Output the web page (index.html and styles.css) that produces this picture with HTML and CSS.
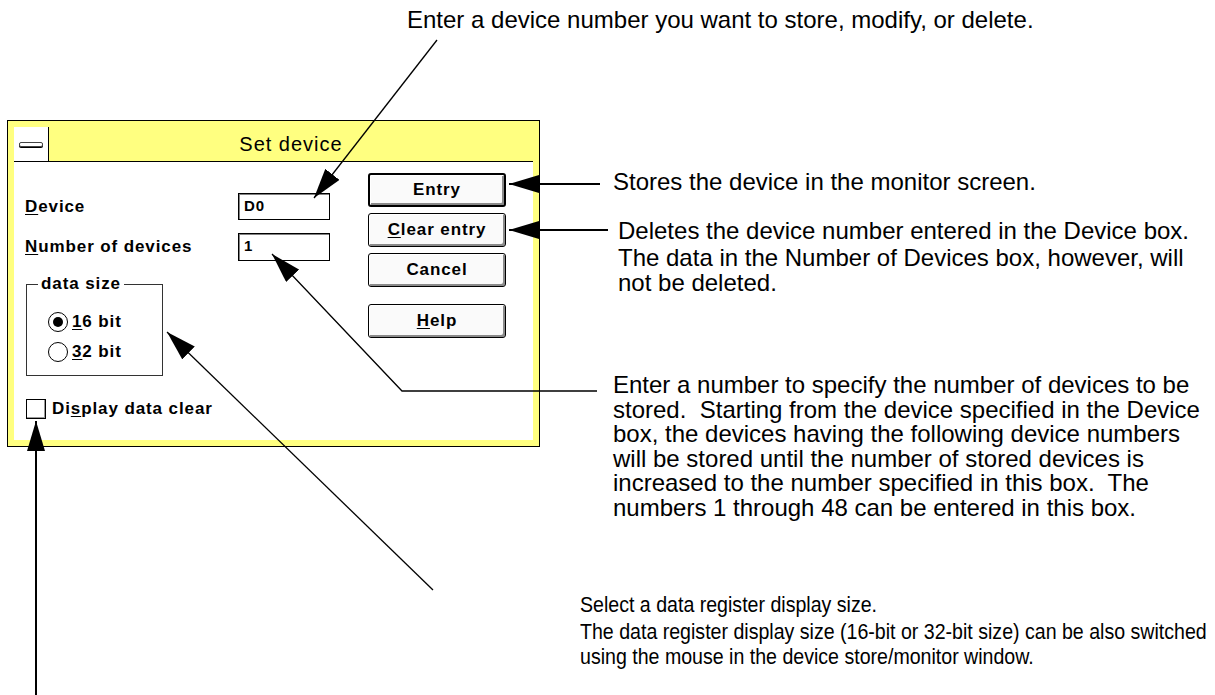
FILE: index.html
```html
<!DOCTYPE html>
<html>
<head>
    <title>Set device</title>
    <link rel="stylesheet" href="styles.css">
</head>
<body>
    <div class="sheet">
        <div class="dialog">
            <div class="titlebar">
                <div class="sysmenu"><span class="sysbar"></span></div>
                <div class="caption">Set device</div>
            </div>
            <div class="client">
                <div class="fields">
                    <div class="row">
                        <label class="field-label"><u>D</u>evice</label>
                        <div class="textbox">D0</div>
                    </div>
                    <div class="row row-second">
                        <label class="field-label"><u>N</u>umber of devices</label>
                        <div class="textbox">1</div>
                    </div>
                    <fieldset class="group">
                        <legend>data size</legend>
                        <div class="radio"><span class="bullet checked"></span><span><u>1</u>6 bit</span></div>
                        <div class="radio"><span class="bullet"></span><span><u>3</u>2 bit</span></div>
                    </fieldset>
                    <div class="check"><span class="checkbox"></span><span>Di<u>s</u>play data clear</span></div>
                </div>
                <div class="buttons">
                    <div class="btn btn-default">Entry</div>
                    <div class="btn"><u>C</u>lear entry</div>
                    <div class="btn">Cancel</div>
                    <div class="btn btn-help"><u>H</u>elp</div>
                </div>
            </div>
        </div>

        <!-- callout texts -->
        <p class="note note-device">Enter a device number you want to store, modify, or delete.</p>
        <p class="note note-entry">Stores the device in the monitor screen.</p>
        <div class="note note-clear">
            <p>Deletes the device number entered in the Device box.</p>
            <p class="follow">The data in the Number of Devices box, however, will<br>not be deleted.</p>
        </div>
        <p class="note note-count">Enter a number to specify the number of devices to be<br>stored.&nbsp; Starting from the device specified in the Device<br>box, the devices having the following device numbers<br>will be stored until the number of stored devices is<br>increased to the number specified in this box.&nbsp; The<br>numbers 1 through 48 can be entered in this box.</p>
        <div class="note note-size">
            <p>Select a data register display size.</p>
            <p class="follow">The data register display size (16-bit or 32-bit size) can be also switched<br>using the mouse in the device store/monitor window.</p>
        </div>

        <!-- leader lines -->
        <svg class="leaders" width="1215" height="695" viewBox="0 0 1215 695">
            <defs>
                <marker id="head" markerUnits="userSpaceOnUse" markerWidth="30" markerHeight="18" refX="30" refY="9" orient="auto">
                    <path d="M0 0 L30 9 L0 18 Z" fill="#000"/>
                </marker>
            </defs>
            <g stroke="#000" stroke-width="1.3" fill="none">
                <line x1="437" y1="40" x2="314" y2="198" marker-end="url(#head)"/>
                <line x1="600" y1="184" x2="509" y2="184" stroke-width="2" marker-end="url(#head)"/>
                <line x1="608" y1="230" x2="509" y2="230" stroke-width="2" marker-end="url(#head)"/>
                <polyline points="597,391 402,391 272,254" marker-end="url(#head)"/>
                <line x1="433" y1="590" x2="167" y2="332" marker-end="url(#head)"/>
                <line x1="36" y1="695" x2="36" y2="421" stroke-width="2" marker-end="url(#head)"/>
            </g>
        </svg>
    </div>
</body>
</html>
```

FILE: styles.css
```css
body { margin: 0; background: #fff; font-family: "Liberation Sans", Arial, sans-serif; color: #000; }
.sheet { position: relative; width: 1215px; height: 695px; overflow: hidden; }

/* dialog window */
.dialog { position: absolute; left: 7px; top: 120px; width: 519px; height: 313px; border: 1px solid #000; background: #ffff80; padding: 6px; display: flex; flex-direction: column; }
.titlebar { display: flex; height: 34px; border-bottom: 1px solid #000; }
.sysmenu { width: 34px; background: #fff; border-right: 1px solid #000; display: flex; align-items: center; justify-content: center; }
.sysbar { width: 22px; height: 3px; border: 1px solid #444; border-radius: 2px; background: #fff; box-shadow: 0 1px 0 #000; }
.caption { flex: 1; text-align: center; font-size: 20px; letter-spacing: 1px; line-height: 34px; }
.client { flex: 1; background: #fff; display: flex; font-size: 17px; font-weight: bold; letter-spacing: 0.9px; }
.client u { text-decoration-thickness: 1px; text-underline-offset: 2px; }

.fields { width: 343px; padding: 31px 0 0 11px; }
.row { display: flex; align-items: center; height: 27px; }
.row-second { margin-top: 13px; height: 28px; }
.field-label { width: 213px; }
.textbox { width: 92px; height: 100%; box-sizing: border-box; border: 1px solid #000; box-shadow: inset 1px 1px 0 #808080; padding: 3px 0 0 5px; font-size: 15px; }

.group { width: 114px; margin: 13px 0 0 1px; padding: 0 0 8px 21px; border: 1px solid #333; }
.group legend { margin-left: -10px; padding: 0 3px; line-height: 20px; }
.radio { display: flex; align-items: center; gap: 4px; height: 30px; }
.radio:first-of-type { margin-top: 13px; }
.bullet { width: 18px; height: 18px; border: 1.5px solid #000; border-radius: 50%; position: relative; }
.bullet.checked::after { content: ""; position: absolute; left: 4px; top: 4px; width: 10px; height: 10px; border-radius: 50%; background: #000; }

.check { display: flex; align-items: center; gap: 6px; margin: 23px 0 0 1px; height: 20px; }
.checkbox { width: 18px; height: 18px; border: 1px solid #000; box-shadow: inset -1px -1px 0 #999; }

.buttons { padding-top: 11px; display: flex; flex-direction: column; gap: 6px; }
.btn { width: 138px; height: 34px; box-sizing: border-box; border: 1px solid #000; border-radius: 3px; background: #fafafa; box-shadow: inset 1px 1px 0 #fff, inset -2px -2px 0 #8a8a8a; display: flex; align-items: center; justify-content: center; }
.btn-default { border-width: 2px; }
.btn-help { margin-top: 11px; }

/* callouts */
.note { position: absolute; margin: 0; font-family: "Liberation Sans", Arial, sans-serif; font-size: 24px; line-height: 24.5px; white-space: nowrap; }
.note p { margin: 0; }
.note .follow { margin-top: 2.5px; }
.note-device { left: 407px; top: 8px; }
.note-entry { left: 613px; top: 170px; }
.note-clear { left: 618px; top: 219px; }
.note-count { left: 613px; top: 373px; }
/* bottom block is set tighter so its long line stays inside the figure */
.note-size { left: 580px; top: 593px; font-size: 22.5px; transform: scaleX(0.87); transform-origin: 0 0; }

.leaders { position: absolute; left: 0; top: 0; pointer-events: none; }
```
